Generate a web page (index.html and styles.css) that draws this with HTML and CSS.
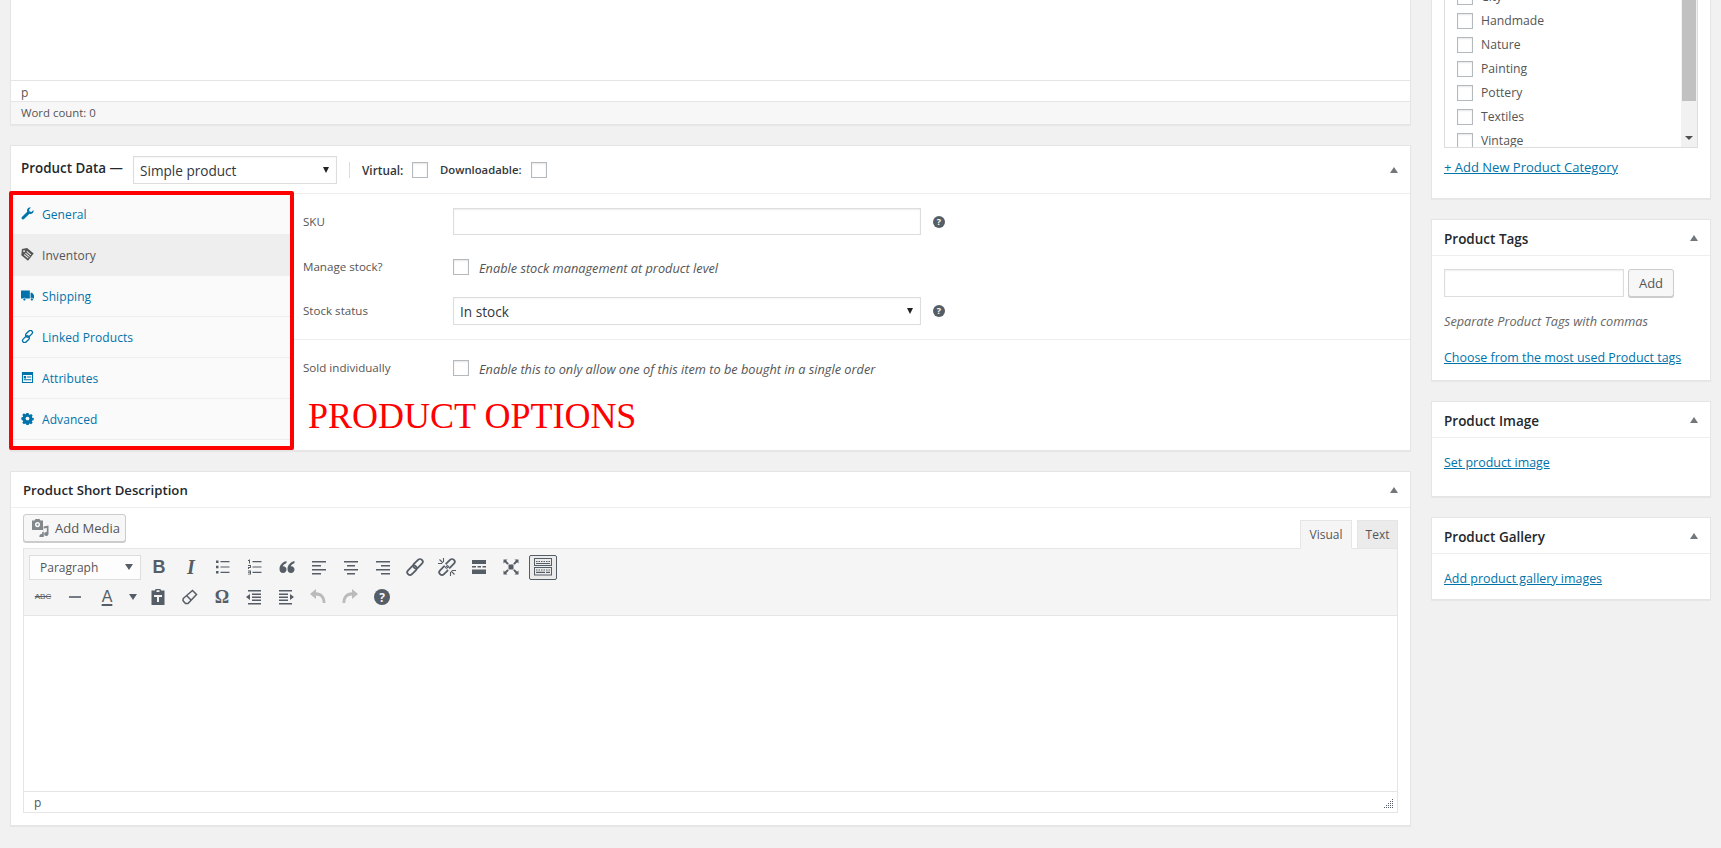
FILE: index.html
```html
<!DOCTYPE html>
<html lang="en">
<head>
<meta charset="utf-8">
<title>Edit product</title>
<link rel="stylesheet" href="styles.css">
</head>
<body>
<div class="page">
  <main class="main-col">
    <section class="card top-editor">
      <div class="top-area"></div>
      <div class="top-path">p</div>
      <div class="top-status">Word count: 0</div>
    </section>

    <section class="card product-data">
      <header class="pd-head">
        <h2 class="pd-title">Product Data —</h2>
        <div class="fake-select type-select"><span>Simple product</span><i class="sel-arrow"></i></div>
        <span class="pd-divider"></span>
        <label class="pd-opt pd-opt-1">Virtual: <input type="checkbox" class="check"></label>
        <label class="pd-opt pd-opt-2">Downloadable: <input type="checkbox" class="check"></label>
        <i class="collapse pd-collapse"></i>
      </header>
      <div class="pd-body">
        <ul class="tabs">
          <li class="tab"><svg class="tab-icon" viewBox="0 0 14 14"><path d="M13.4 3.2c.4 1.5-.1 3-1.3 3.8-1 .6-2.100.7-3 .3L3.300 13c-.6.6-1.500.6-2 .1l-.4-.4c-.5-.6-.5-1.400.1-2l5.700-5.700c-.4-1-.3-2.100.3-3C7.800.8 9.300.3 10.800.6L8.700 2.700l.5 2.100 2.100.5z"/></svg><a>General</a></li>
          <li class="tab tab-active"><svg class="tab-icon" viewBox="0 0 14 14"><path fill-rule="evenodd" d="M6.500 0l7.200 5.800L7.500 13.800 .3 7.800 1 1zM3.300 2.400a1 1 0 1 0 .01 0zM6.500 3.300L11 7.100l-.7.8-4.500-3.800zM5.100 5L9.600 8.800l-.7.8L4.400 5.800zM3.700 6.700l4.500 3.800-.7.800L3 7.500z"/></svg><a>Inventory</a></li>
          <li class="tab"><svg class="tab-icon" viewBox="0 0 14 14"><path d="M0 1.500h9.500v8.800H5.300a1.700 1.700 0 0 0-3.100 0H0zM10.300 4h1.700L14 6.800v3.500h-.8a1.700 1.700 0 0 0-3 0h.1zM3.700 10a1.200 1.200 0 1 1-.01 0zM11.700 10a1.200 1.200 0 1 1-.01 0z"/></svg><a>Shipping</a></li>
          <li class="tab"><svg class="tab-icon" viewBox="0 0 14 14"><g fill="none" stroke-width="1.400" class="stroke-blue"><rect x="6.500" y="-.2" width="4.400" height="8.400" rx="2.200" transform="rotate(45 8.700 4)"/><rect x="3.100" y="5.800" width="4.400" height="8.400" rx="2.200" transform="rotate(45 5.300 10)"/></g></svg><a>Linked Products</a></li>
          <li class="tab"><svg class="tab-icon" viewBox="0 0 14 14"><path fill-rule="evenodd" d="M1 1h12v12H1zM2.200 4.200v7.600h9.600V4.200zM3 5.500h2.500V8H3zM6.500 6h4.500v1H6.500zM3 9h8v1H3z"/></svg><a>Attributes</a></li>
          <li class="tab"><svg class="tab-icon" viewBox="0 0 14 14"><path fill-rule="evenodd" d="M5.800 1h2.400l.3 1.600 1 .4 1.400-.9 1.700 1.700-.9 1.400.4 1 1.600.3v2.400l-1.600.3-.4 1 .9 1.400-1.700 1.700-1.400-.9-1 .4-.3 1.600H5.800l-.3-1.600-1-.4-1.400.9-1.700-1.700.9-1.400-.4-1L.3 8.200V5.800l1.600-.3.4-1-.9-1.400 1.700-1.700 1.400.9 1-.4zM7 5a2 2 0 1 0 .01 0z"/></svg><a>Advanced</a></li>
        </ul>
        <div class="panel">
          <div class="group">
            <div class="field field-sku">
              <label class="f-label">SKU</label>
              <input type="text" class="text-input f-wide">
              <svg class="help" viewBox="0 0 12 12"><circle cx="6" cy="6" r="6"/><text x="6" y="9.200" class="help-q">?</text></svg>
            </div>
            <div class="field field-stock">
              <label class="f-label">Manage stock?</label>
              <input type="checkbox" class="check">
              <span class="f-desc">Enable stock management at product level</span>
            </div>
            <div class="field field-status">
              <label class="f-label">Stock status</label>
              <div class="fake-select f-wide"><span>In stock</span><i class="sel-arrow"></i></div>
              <svg class="help" viewBox="0 0 12 12"><circle cx="6" cy="6" r="6"/><text x="6" y="9.200" class="help-q">?</text></svg>
            </div>
          </div>
          <div class="field field-sold">
            <label class="f-label">Sold individually</label>
            <input type="checkbox" class="check">
            <span class="f-desc">Enable this to only allow one of this item to be bought in a single order</span>
          </div>
        </div>
      </div>
      <div class="red-box"></div>
      <div class="red-label">PRODUCT OPTIONS</div>
    </section>

    <section class="card short-desc">
      <header class="box-head"><h2 class="box-title short-title">Product Short Description</h2><i class="collapse sd-collapse"></i></header>
      <div class="editor-wrap">
        <div class="editor-tools">
          <button class="media-btn"><svg class="media-icon" viewBox="0 0 18 18"><path fill-rule="evenodd" d="M1 1.500h2.500L4.500 0h4l1 1.500H12V11H1zM6.500 3a2.600 2.600 0 1 0 .01 0zM6.500 4.600a1 1 0 1 1-.01 0z"/><path d="M17.500 6.500v8.500a2.200 2 0 1 1-1.700-1.900V9l-3 .6V17a2.200 2 0 1 1-1.700-1.900V13h1.500V7.500z"/></svg>Add Media</button>
          <div class="mode-tabs"><span class="mode mode-on">Visual</span><span class="mode mode-off">Text</span></div>
        </div>
        <div class="mce">
          <div class="mce-toolbar">
            <div class="mce-row mce-row-1">
              <div class="format"><span>Paragraph</span><i class="format-arrow"></i></div>
              <span class="btn btn-text btn-b">B</span>
              <span class="btn btn-text btn-i">I</span>
              <span class="btn"><svg viewBox="0 0 20 20"><path d="M3 3.500h2.500V6H3zM3 8.700h2.500v2.500H3zM3 14h2.500v2.500H3zM7.500 4h9v1.200h-9zM7.500 9.400h9v1.200h-9zM7.500 14.700h9v1.200h-9z"/></svg></span>
              <span class="btn"><svg viewBox="0 0 20 20"><path d="M7.500 4h9v1.200h-9zM7.500 9.400h9v1.200h-9zM7.500 14.700h9v1.200h-9z"/><path class="ol-num" d="M4 2.500h1v4H4zM3 3h1v1H3zM3 8h3v1H3zM5 9h1v1H5zM3 10h3v1H3zM3 11h1v1H3zM3 13.500h3v1H3zM5 14.500h1v3H5zM3 15.200h2v.8H3zM3 16.800h2v.8H3z"/></svg></span>
              <span class="btn"><svg viewBox="0 0 20 20"><path d="M9.500 4C5.500 5 2.500 8 2.500 12c0 2.400 1.500 4 3.500 4s3.500-1.500 3.500-3.400-1.400-3.300-3.200-3.300c-.2 0-.4 0-.6.100.5-1.400 1.900-2.500 3.800-3.300zM17.500 4c-4 1-7 4-7 8 0 2.400 1.500 4 3.500 4s3.500-1.500 3.500-3.400-1.400-3.300-3.200-3.300c-.2 0-.4 0-.6.100.5-1.400 1.900-2.500 3.800-3.300z"/></svg></span>
              <span class="btn"><svg viewBox="0 0 20 20"><path d="M3 4h14v1.500H3zM3 8h9v1.500H3zM3 12h14v1.500H3zM3 16h9v1.500H3z"/></svg></span>
              <span class="btn"><svg viewBox="0 0 20 20"><path d="M3 4h14v1.500H3zM6 8h8v1.500H6zM3 12h14v1.500H3zM6 16h8v1.500H6z"/></svg></span>
              <span class="btn"><svg viewBox="0 0 20 20"><path d="M3 4h14v1.500H3zM8 8h9v1.500H8zM3 12h14v1.500H3zM8 16h9v1.500H8z"/></svg></span>
              <span class="btn"><svg viewBox="0 0 20 20"><g fill="none" class="stroke-ink" stroke-width="1.800"><rect x="10.300" y="1.200" width="5.500" height="11" rx="2.750" transform="rotate(45 13 6.700)"/><rect x="4.200" y="7.800" width="5.500" height="11" rx="2.750" transform="rotate(45 7 13.300)"/></g></svg></span>
              <span class="btn"><svg viewBox="0 0 20 20"><g fill="none" class="stroke-ink" stroke-width="1.800"><rect x="10.300" y="1.200" width="5.500" height="11" rx="2.750" transform="rotate(45 13 6.700)"/><rect x="4.200" y="7.800" width="5.500" height="11" rx="2.750" transform="rotate(45 7 13.300)"/></g><path class="cut" d="M6.500 4.500l9 11-1.500 1-9-11z"/><g fill="none" class="stroke-ink" stroke-width="1.100"><path d="M2.500 2.500l3.500 3.500M6.500 1v4M1 6.500h4M17.500 17.500L14 14M13.500 19v-4M19 13.500h-4M9 9l2 2"/></g></svg></span>
              <span class="btn"><svg viewBox="0 0 20 20"><path d="M3 3h14v4H3zM3 9h4v1.600H3zM8.500 9h3.500v1.600H8.500zM13.500 9H17v1.600h-3.500zM3 12.500h14V17H3z"/></svg></span>
              <span class="btn"><svg viewBox="0 0 20 20"><path d="M7.500 7.500h5v5h-5zM2.500 2.500H6.500L5.200 3.800 7.800 6.400 6.400 7.800 3.800 5.200 2.500 6.500zM17.500 2.500V6.500L16.200 5.200 13.600 7.800 12.200 6.400 14.800 3.800 13.500 2.500zM2.500 17.500V13.500L3.800 14.800 6.400 12.200 7.800 13.600 5.200 16.200 6.500 17.500zM17.500 17.500H13.500L14.800 16.200 12.200 13.600 13.600 12.200 16.200 14.800 17.500 13.500z"/></svg></span>
              <span class="btn btn-pressed"><svg viewBox="0 0 18 18"><g fill="none" class="stroke-ink" stroke-width="1"><rect x=".5" y=".5" width="17" height="7"/><rect x=".5" y="9.500" width="17" height="7.500"/></g><path d="M2 3h1.500v1H2zM4.500 3H6v1H4.500zM7 3h1.500v1H7zM9.500 3H11v1H9.500zM12 3h1.500v1H12zM14.500 3H16v1h-1.500zM2 5h14v1H2zM2 11.500h1.500v1H2zM4.500 11.500H6v1H4.500zM7 11.500h1.500v1H7zM9.500 11.500H11v1H9.500zM12 11.500h1.500v1H12zM14.500 11.500H16v1h-1.500zM2 13.800h9v1.200H2zM12 13.800h4v1.200h-4z"/></svg></span>
            </div>
            <div class="mce-row mce-row-2">
              <span class="btn btn-text btn-abc">ABC</span>
              <span class="btn"><svg viewBox="0 0 20 20"><path d="M4 9.200h12v1.600H4z"/></svg></span>
              <span class="btn btn-text btn-a">A</span>
              <span class="caret-btn"><i class="format-arrow"></i></span>
              <span class="btn"><svg viewBox="0 0 20 20"><path fill-rule="evenodd" d="M7.500 2h5l.5 1.500h3.500V18h-13V3.500H7zM8.500 3.200V5h3V3.200zM6 8v2h3v5h2v-5h3V8z"/></svg></span>
              <span class="btn"><svg viewBox="0 0 20 20"><path fill="none" class="stroke-ink" stroke-width="1.500" d="M12.500 3.500l4 4-8.500 9-2.500-.1-2.500-2.600.2-2.300zM7 9l4.500 4.500"/></svg></span>
              <span class="btn btn-text btn-omega">Ω</span>
              <span class="btn"><svg viewBox="0 0 20 20"><path d="M4 3h13v1.500H4zM8 6.500h9V8H8zM8 9.500h9V11H8zM8 12.500h9V14H8zM4 16h13v1.500H4zM2 10l4-3v6z"/></svg></span>
              <span class="btn"><svg viewBox="0 0 20 20"><path d="M3 3h13v1.500H3zM3 6.500h9V8H3zM3 9.500h9V11H3zM3 12.500h9V14H3zM3 16h13v1.500H3zM18 10l-4-3v6z"/></svg></span>
              <span class="btn btn-off"><svg viewBox="0 0 20 20"><path d="M2 7l6-5v3.200c5.500.2 9.500 3.500 9.500 10.800h-2.800c0-5-2.500-7.300-6.700-7.400V12z"/></svg></span>
              <span class="btn btn-off"><svg viewBox="0 0 20 20"><path d="M18 7l-6-5v3.200C6.500 5.400 2.500 8.700 2.500 16h2.800c0-5 2.500-7.300 6.700-7.400V12z"/></svg></span>
              <span class="btn"><svg viewBox="0 0 20 20"><circle cx="10" cy="10" r="8"/><text x="10" y="14.500" class="help-big">?</text></svg></span>
            </div>
          </div>
          <div class="mce-area"></div>
          <div class="mce-path">p<svg class="grip" viewBox="0 0 10 10"><path d="M8 0h1v1H8zM6 2h1v1H6zM8 2h1v1H8zM4 4h1v1H4zM6 4h1v1H6zM8 4h1v1H8zM2 6h1v1H2zM4 6h1v1H4zM6 6h1v1H6zM8 6h1v1H8zM0 8h1v1H0zM2 8h1v1H2zM4 8h1v1H4zM6 8h1v1H6zM8 8h1v1H8z"/></svg></div>
        </div>
      </div>
    </section>
  </main>

  <aside class="side-col">
    <section class="card cat-card">
      <div class="cat-box">
        <ul class="cat-list">
          <li class="cat-item"><input type="checkbox" class="check"><span>City</span></li>
          <li class="cat-item"><input type="checkbox" class="check"><span>Handmade</span></li>
          <li class="cat-item"><input type="checkbox" class="check"><span>Nature</span></li>
          <li class="cat-item"><input type="checkbox" class="check"><span>Painting</span></li>
          <li class="cat-item"><input type="checkbox" class="check"><span>Pottery</span></li>
          <li class="cat-item"><input type="checkbox" class="check"><span>Textiles</span></li>
          <li class="cat-item"><input type="checkbox" class="check"><span>Vintage</span></li>
        </ul>
        <div class="scrollbar"><div class="scroll-thumb"></div><i class="scroll-arrow"></i></div>
      </div>
      <a class="link add-cat">+ Add New Product Category</a>
    </section>

    <section class="card">
      <header class="box-head"><h2 class="box-title side-title">Product Tags</h2><i class="collapse"></i></header>
      <div class="tags-body">
        <div class="tag-row"><input type="text" class="text-input tag-input"><button class="add-btn">Add</button></div>
        <p class="tag-hint">Separate Product Tags with commas</p>
        <a class="link link-small tag-choose">Choose from the most used Product tags</a>
      </div>
    </section>

    <section class="card">
      <header class="box-head"><h2 class="box-title side-title">Product Image</h2><i class="collapse"></i></header>
      <div class="image-body"><a class="link link-small">Set product image</a></div>
    </section>

    <section class="card">
      <header class="box-head"><h2 class="box-title side-title">Product Gallery</h2><i class="collapse"></i></header>
      <div class="gallery-body"><a class="link link-small">Add product gallery images</a></div>
    </section>
  </aside>
</div>
</body>
</html>
```
FILE: styles.css
```css
* { box-sizing: border-box; }
html, body { margin: 0; padding: 0; }
body {
  background: #f1f1f1;
  color: #444;
  font-family: "Open Sans", sans-serif;
  font-size: 13px;
  line-height: 18px;
  height: 848px;
  overflow: hidden;
}
ul { list-style: none; margin: 0; padding: 0; }
h2, p { margin: 0; }
svg { display: block; fill: #555d66; }

.page { display: flex; gap: 20px; padding-left: 10px; }
.main-col { width: 1401px; display: flex; flex-direction: column; gap: 20px; }
.side-col { width: 280px; display: flex; flex-direction: column; gap: 20px; }

.card {
  background: #fff;
  border: 1px solid #e5e5e5;
  box-shadow: 0 1px 1px rgba(0,0,0,.04);
}

/* top editor remnant */
.top-editor { border-top: 0; }
.top-area { height: 81px; border-bottom: 1px solid #e5e5e5; }
.top-path { height: 21px; padding-left: 10px; line-height: 23px; font-size: 12px; color: #555; border-bottom: 1px solid #e5e5e5; }
.top-status { height: 22px; padding-left: 10px; background: #f7f7f7; font-size: 11.4px; line-height: 22px; color: #555; }

/* product data */
.product-data { position: relative; }
.pd-head {
  height: 48px;
  display: flex;
  align-items: center;
  padding-left: 10px;
  border-bottom: 1px solid #eee;
}
.pd-title { font-size: 13.4px; font-weight: 600; color: #23282d; width: 112px; line-height: 18px; margin-top: -4px; white-space: nowrap; }
.fake-select {
  height: 28px;
  border: 1px solid #ddd;
  background: #fff;
  display: flex;
  align-items: center;
  justify-content: space-between;
  padding: 2px 7px 0 6px;
  font-size: 13.6px;
  color: #32373c;
  box-shadow: inset 0 1px 2px rgba(0,0,0,.04);
}
.type-select { width: 204px; }
.sel-arrow { width: 0; height: 0; border-left: 3.5px solid transparent; border-right: 3.5px solid transparent; border-top: 6px solid #222; margin-top: -2px; }
.pd-divider { width: 1px; height: 16px; background: #ddd; margin: 0 12px; }
.pd-opt { display: flex; align-items: center; font-weight: 600; color: #32373c; justify-content: space-between; }
.pd-opt-1 { width: 66px; font-size: 11.8px; }
.pd-opt-2 { width: 107px; margin-left: 12px; font-size: 11.3px; }
.collapse { width: 0; height: 0; border-left: 4.5px solid transparent; border-right: 4.5px solid transparent; border-bottom: 6px solid #72777c; margin-left: auto; }
.pd-collapse { margin-right: 12px; }

.check {
  appearance: none;
  -webkit-appearance: none;
  display: block;
  flex: none;
  width: 16px;
  height: 16px;
  margin: 0;
  background: #fff;
  border: 1px solid #b4b9be;
  box-shadow: inset 0 1px 2px rgba(0,0,0,.1);
}

.pd-body { display: flex; min-height: 256px; }
.tabs { width: 280px; flex: none; background: #fafafa; }
.tab {
  height: 41px;
  display: flex;
  align-items: center;
  padding: 2px 0 0 10px;
  font-size: 12px;
  letter-spacing: .08px;
  border-bottom: 1px solid #eee;
  color: #0073aa;
}
.tab svg { fill: #0073aa; }
.tab-icon { width: 13px; height: 13px; margin-right: 8px; margin-top: -4px; }
.tab-active { background: #eee; color: #555; border-bottom-color: #eee; }
.tab-active svg { fill: #555; }
.stroke-blue { stroke: #0073aa; }
.stroke-ink { stroke: #555d66; }
.cut { fill: #f5f5f5; }

.panel { flex: 1; font-size: 11.6px; color: #555; }
.group { padding-bottom: 14px; border-bottom: 1px solid #eee; }
.field { display: flex; align-items: center; padding-left: 12px; }
.f-label { width: 150px; flex: none; }
.f-wide { width: 468px; flex: none; }
.text-input { height: 27px; border: 1px solid #ddd; background: #fff; margin: 0; padding: 0 6px; box-shadow: inset 0 1px 2px rgba(0,0,0,.07); }
.help { width: 12px; height: 12px; margin-left: 12px; flex: none; }
.help-q { font: 700 9px "Open Sans", sans-serif; fill: #fff; text-anchor: middle; }
.help-big { font: 700 12px "Open Sans", sans-serif; fill: #f5f5f5; text-anchor: middle; }
.f-desc { font-style: italic; font-size: 12.75px; margin-left: 10px; padding-top: 1px; color: #555; }
.field-sku { margin-top: 14px; height: 27px; }
.field-stock { margin-top: 24px; height: 16px; }
.field-status { margin-top: 22px; height: 28px; }
.field-sold { margin-top: 20px; height: 16px; }

.red-box {
  position: absolute;
  left: -2px;
  top: 45px;
  width: 285px;
  height: 259px;
  border: 4px solid #f00;
  border-radius: 2px;
}
.red-label {
  position: absolute;
  left: 297px;
  top: 249px;
  font-family: "Liberation Serif", serif;
  font-size: 36px;
  line-height: 42px;
  color: #f00;
  white-space: nowrap;
}

/* boxes */
.box-head { height: 36px; display: flex; align-items: center; padding: 0 12px; border-bottom: 1px solid #eee; }
.box-title { font-size: 13.5px; font-weight: 600; color: #23282d; line-height: 18px; }
.side-title { margin-top: 2px; }
.short-title { font-size: 13.2px; }
.sd-collapse { margin-right: 0; }

.editor-wrap { padding: 6px 12px 12px; }
.editor-tools { display: flex; justify-content: space-between; align-items: flex-end; height: 34px; }
.media-btn {
  width: 103px;
  height: 28px;
  margin-bottom: 6px;
  display: flex;
  align-items: center;
  padding: 0 0 0 7px;
  background: #f7f7f7;
  border: 1px solid #ccc;
  border-radius: 3px;
  box-shadow: 0 1px 0 #ccc;
  font: 13px "Open Sans", sans-serif;
  color: #555;
}
.media-icon { width: 18px; height: 18px; margin-right: 6px; fill: #82878c; }
.mode-tabs { display: flex; gap: 5px; margin-bottom: -1px; position: relative; }
.mode { height: 29px; text-align: center; line-height: 28px; font-size: 12px; color: #555; background: #ebebeb; border: 1px solid #e5e5e5; border-bottom: 1px solid #e5e5e5; }
.mode-on { width: 52px; background: #f5f5f5; border-bottom-color: #f5f5f5; }
.mode-off { width: 41px; }

.mce { border: 1px solid #e5e5e5; }
.mce-toolbar { background: #f5f5f5; height: 67px; padding-top: 5px; border-bottom: 1px solid #e5e5e5; }
.mce-row { display: flex; align-items: center; height: 26px; }
.mce-row-1 { padding-left: 5px; }
.mce-row-2 { padding-left: 3px; margin-top: 4px; }
.format {
  width: 112px;
  height: 25px;
  margin-right: 2px;
  display: flex;
  align-items: center;
  justify-content: space-between;
  padding: 2px 7px 0 10px;
  background: #fdfdfd;
  border: 1px solid #ddd;
  font-size: 12px;
  color: #555;
}
.format-arrow { width: 0; height: 0; border-left: 4px solid transparent; border-right: 4px solid transparent; border-top: 6px solid #555d66; }
.format .format-arrow { margin-top: -2px; }
.caret-btn { width: 19px; display: flex; justify-content: center; }
.btn { width: 32px; height: 26px; display: flex; align-items: center; justify-content: center; color: #555d66; }
.btn svg { width: 20px; height: 20px; }
.btn-text { font-family: "Liberation Sans", sans-serif; line-height: 26px; }
.btn-b { font-size: 18px; font-weight: 700; }
.btn-i { font-family: "Liberation Serif", serif; font-size: 20px; font-weight: 700; font-style: italic; }
.btn-abc { font-size: 8px; font-weight: 400; text-decoration: line-through; }
.btn-a { font-size: 16px; text-decoration: underline; text-decoration-thickness: 2px; text-underline-offset: 2px; }
.btn-omega { font-size: 18px; font-family: "Liberation Serif", serif; font-weight: 700; }
.btn-off svg { fill: #bbb; }
.btn-pressed { width: 28px; margin-left: 2px; border: 1px solid #555d66; border-radius: 2px; background: #ebebeb; height: 25px; }
.btn-pressed svg { width: 18px; height: 18px; }
.mce-area { height: 175px; background: #fff; }
.mce-path { height: 21px; border-top: 1px solid #e5e5e5; padding-left: 10px; font-size: 12px; line-height: 21px; color: #555; position: relative; }
.grip { position: absolute; right: 3px; bottom: 3px; width: 10px; height: 10px; fill: #555d66; }

/* side */
.cat-card { border-top: 0; padding: 0 12px 22px; }
.cat-box { height: 148px; border: 1px solid #ddd; border-top: 0; overflow: hidden; display: flex; }
.cat-list { flex: 1; margin-top: -15px; padding-left: 12px; }
.cat-item { height: 24px; display: flex; align-items: center; gap: 8px; color: #555; font-size: 12.2px; }
.scrollbar { width: 16px; flex: none; background: #f1f1f1; padding: 0 1px; position: relative; }
.scroll-thumb { height: 101px; background: #c1c1c1; }
.scroll-arrow { position: absolute; left: 4px; top: 136px; width: 0; height: 0; border-left: 4px solid transparent; border-right: 4px solid transparent; border-top: 4px solid #505050; }
.link { color: #0073aa; text-decoration: underline; display: inline-block; }
.link-small { font-size: 12.45px; }
.add-cat { margin-top: 10px; }

.tags-body { padding: 13px 12px 13px; }
.tag-row { display: flex; gap: 4px; }
.tag-input { width: 180px; height: 28px; }
.add-btn {
  width: 46px;
  height: 28px;
  padding: 0;
  background: #f7f7f7;
  border: 1px solid #ccc;
  border-radius: 3px;
  box-shadow: 0 1px 0 #ccc;
  font: 13px "Open Sans", sans-serif;
  color: #555;
}
.tag-hint { margin-top: 15px; font-style: italic; font-size: 12.7px; color: #666; }
.tag-choose { margin-top: 19px; }
.image-body { padding: 15px 12px 24px; }
.gallery-body { padding: 15px 12px 11px; }
```
